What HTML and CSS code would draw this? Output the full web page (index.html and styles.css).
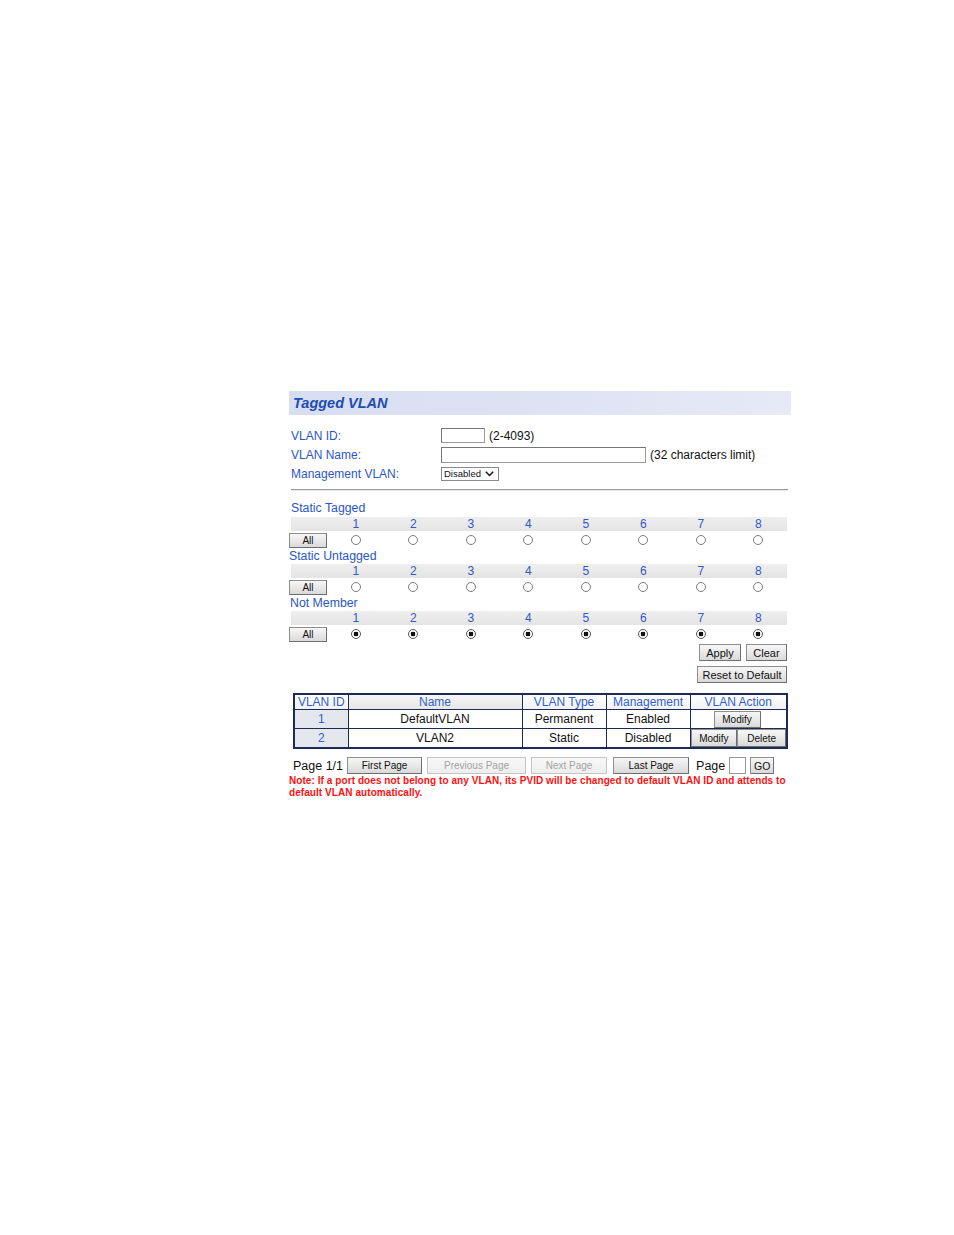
FILE: index.html
```html
<!DOCTYPE html>
<html>
<head>
<meta charset="utf-8">
<link rel="stylesheet" href="styles.css">
</head>
<body>
<div class="panel">
  <div class="title">Tagged VLAN</div>

  <div class="form">
    <div class="frow">
      <span class="flabel">VLAN ID:</span>
      <span class="input id-input"></span>
      <span class="hint">(2-4093)</span>
    </div>
    <div class="frow">
      <span class="flabel">VLAN Name:</span>
      <span class="input name-input"></span>
      <span class="hint">(32 characters limit)</span>
    </div>
    <div class="frow">
      <span class="flabel">Management VLAN:</span>
      <span class="select">Disabled<svg class="caret" width="9" height="6" viewBox="0 0 9 6"><path d="M0.8 0.8 L4.5 4.6 L8.2 0.8" fill="none" stroke="#111" stroke-width="1.4"/></svg></span>
    </div>
  </div>

  <div class="rule"></div>

  <div class="section sec-first">
    <div class="slabel">Static Tagged</div>
    <div class="band"><span></span><span>1</span><span>2</span><span>3</span><span>4</span><span>5</span><span>6</span><span>7</span><span>8</span></div>
    <div class="ports">
      <span class="btn all">All</span>
      <span class="radio"></span><span class="radio"></span><span class="radio"></span><span class="radio"></span>
      <span class="radio"></span><span class="radio"></span><span class="radio"></span><span class="radio"></span>
    </div>
  </div>

  <div class="section">
    <div class="slabel s2">Static Untagged</div>
    <div class="band"><span></span><span>1</span><span>2</span><span>3</span><span>4</span><span>5</span><span>6</span><span>7</span><span>8</span></div>
    <div class="ports">
      <span class="btn all">All</span>
      <span class="radio"></span><span class="radio"></span><span class="radio"></span><span class="radio"></span>
      <span class="radio"></span><span class="radio"></span><span class="radio"></span><span class="radio"></span>
    </div>
  </div>

  <div class="section">
    <div class="slabel s3">Not Member</div>
    <div class="band"><span></span><span>1</span><span>2</span><span>3</span><span>4</span><span>5</span><span>6</span><span>7</span><span>8</span></div>
    <div class="ports">
      <span class="btn all">All</span>
      <span class="radio on"></span><span class="radio on"></span><span class="radio on"></span><span class="radio on"></span>
      <span class="radio on"></span><span class="radio on"></span><span class="radio on"></span><span class="radio on"></span>
    </div>
  </div>

  <div class="actions">
    <div class="arow">
      <span class="btn apply">Apply</span>
      <span class="btn clear">Clear</span>
    </div>
    <div class="arow">
      <span class="btn reset">Reset to Default</span>
    </div>
  </div>

  <table class="vlans">
    <thead>
      <tr>
        <th class="c-id">VLAN ID</th>
        <th class="c-name">Name</th>
        <th class="c-type">VLAN Type</th>
        <th class="c-mgmt">Management</th>
        <th class="c-act">VLAN Action</th>
      </tr>
    </thead>
    <tbody>
      <tr>
        <td class="idcell">1</td>
        <td>DefaultVLAN</td>
        <td>Permanent</td>
        <td>Enabled</td>
        <td class="actcell"><div class="acts one"><span class="btn small modify1">Modify</span></div></td>
      </tr>
      <tr>
        <td class="idcell">2</td>
        <td>VLAN2</td>
        <td>Static</td>
        <td>Disabled</td>
        <td class="actcell"><div class="acts"><span class="btn small modify2">Modify</span><span class="btn small delete">Delete</span></div></td>
      </tr>
    </tbody>
  </table>

  <div class="pager">
    <span class="ptext">Page 1/1</span>
    <span class="btn pbtn pfirst">First Page</span>
    <span class="btn pbtn pprev disabled">Previous Page</span>
    <span class="btn pbtn pnext disabled">Next Page</span>
    <span class="btn pbtn plast">Last Page</span>
    <span class="ptext page">Page</span>
    <span class="input pinput"></span>
    <span class="btn pbtn go">GO</span>
  </div>

  <p class="note">Note: If a port does not belong to any VLAN, its PVID will be changed to default VLAN ID and attends to default VLAN automatically.</p>
</div>
</body>
</html>
```

FILE: styles.css
```css
* { box-sizing: border-box; }

html, body {
  margin: 0;
  padding: 0;
  background: #ffffff;
}

body {
  font-family: "Liberation Sans", Arial, sans-serif;
  font-size: 12px;
  color: #000;
}

.panel {
  width: 502px;
  margin: 391px 0 0 289px;
}

.title {
  height: 24px;
  padding: 3px 0 0 4px;
  background: linear-gradient(to right, #d8def1 0%, #dfe4f4 60%, #e6eaf7 100%);
  color: #1b4db3;
  font-weight: bold;
  font-style: italic;
  font-size: 14.5px;
  line-height: 18px;
}

.form {
  margin-top: 11px;
  padding-left: 2px;
  display: flex;
  flex-direction: column;
}

.frow {
  height: 19px;
  display: flex;
  align-items: center;
}

.flabel {
  width: 150px;
  color: #2a56c6;
  font-size: 12px;
}

.hint {
  margin-left: 4px;
  font-size: 12px;
  color: #111;
}

.input {
  display: inline-block;
  background: #fff;
  border: 1px solid #9a9a9a;
  border-top-color: #777;
  border-left-color: #777;
}

.id-input { width: 44px; height: 15px; }
.name-input { width: 205px; height: 16px; }

.select {
  display: inline-flex;
  align-items: center;
  width: 58px;
  height: 14px;
  border: 1px solid #8a8a8a;
  font-size: 9.5px;
  padding-left: 2px;
  background: #fff;
  color: #111;
}

.caret { margin-left: 4px; }

.rule {
  margin: 6px 3px 0 2px;
  height: 2px;
  border-top: 1px solid #9b9b9b;
  border-bottom: 1px solid #e6e6e6;
}

.section { display: flex; flex-direction: column; }

.section.sec-first { margin-top: 10px; }

.slabel {
  height: 15px;
  line-height: 15px;
  padding-left: 2px;
  color: #2a56c6;
  font-size: 12.3px;
}

.slabel.s2, .slabel.s3 { padding-left: 0; height: 14px; line-height: 14px; margin-top: 1px; }
.slabel.s3 { padding-left: 1px; }

.band {
  margin-top: 1px;
  margin-left: 2px;
  width: 496px;
  height: 14px;
  display: grid;
  grid-template-columns: 36px repeat(8, 57.5px);
  background: linear-gradient(to bottom, #efefef 0%, #e4e4e4 100%);
  color: #3358c8;
  font-size: 12px;
  line-height: 14px;
  text-align: center;
}

.ports {
  margin-top: 1px;
  height: 16px;
  display: grid;
  grid-template-columns: 38px repeat(8, 57.5px);
  align-items: center;
  justify-items: center;
}

.btn {
  display: inline-flex;
  align-items: center;
  justify-content: center;
  border: 1px solid #8e8e8e;
  border-right-color: #6e6e6e;
  border-bottom-color: #6e6e6e;
  background: linear-gradient(to bottom, #f6f6f6 0%, #e9e9e9 50%, #d9d9d9 100%);
  color: #111;
  font-size: 10.5px;
  white-space: nowrap;
}

.all {
  justify-self: start;
  width: 38px;
  height: 15px;
  font-size: 10px;
}

.radio {
  display: block;
  width: 10px;
  height: 10px;
  border: 1px solid #7c7c7c;
  border-radius: 50%;
  background: #fff;
}

.radio.on {
  background: radial-gradient(circle, #111 0, #111 2.2px, #fff 2.6px);
  border-color: #555;
}

.actions {
  margin-top: 2px;
  display: flex;
  flex-direction: column;
  align-items: flex-end;
  padding-right: 4px;
  gap: 5px;
}

.arow { display: flex; gap: 5px; }

.apply { width: 42px; height: 17px; font-size: 11px; }
.clear { width: 41px; height: 17px; font-size: 11px; }
.reset { width: 90px; height: 17px; font-size: 11px; }

.vlans {
  margin: 10px 0 0 4px;
  width: 493px;
  border-collapse: collapse;
  border: 2px solid #1c2a55;
  table-layout: fixed;
}

.vlans th, .vlans td {
  border: 1px solid #1c2a55;
  padding: 0;
  text-align: center;
  font-size: 12px;
  white-space: nowrap;
}

.vlans th {
  height: 15px;
  font-weight: normal;
  color: #2f5fd2;
  background: linear-gradient(to bottom, #ffffff 0%, #f1f1f1 100%);
}

.vlans th.c-name { background: linear-gradient(to bottom, #f6f6f6 0%, #e6e6e6 100%); }

.c-id { width: 54px; }
.c-name { width: 174px; }
.c-type { width: 84px; }
.c-mgmt { width: 84px; }
.c-act { width: 97px; }

.vlans td { height: 19px; color: #111; }

.vlans td.idcell {
  background: #e4e7ee;
  color: #2f5fd2;
}

.actcell { padding: 0; }

.acts {
  display: flex;
  justify-content: space-between;
}

.acts.one { justify-content: flex-start; }

.small { height: 17px; font-size: 10px; }
.modify1 { width: 47px; margin-left: 23px; }
.modify2 { width: 47px; height: 18px; }
.delete { width: 49px; height: 18px; }

.pager {
  margin: 8px 0 0 4px;
  display: flex;
  align-items: center;
  height: 17px;
}

.ptext { font-size: 12.5px; color: #111; }

.pbtn { height: 17px; font-size: 10px; }
.pfirst { width: 75px; margin-left: 4px; }
.pprev { width: 99px; margin-left: 5px; }
.pnext { width: 76px; margin-left: 5px; }
.plast { width: 76px; margin-left: 6px; }
.page { margin-left: 7px; }
.pinput { width: 17px; height: 17px; margin-left: 4px; border-color: #999; }
.go { width: 24px; margin-left: 4px; font-size: 10.5px; }

.disabled {
  color: #a3a3a3;
  background: linear-gradient(to bottom, #f7f7f7 0%, #eeeeee 100%);
  border-color: #c4c4c4;
}

.note {
  margin: 1px 0 0 0;
  width: 502px;
  color: #ff1010;
  font-weight: bold;
  font-size: 10px;
  letter-spacing: 0.07px;
  line-height: 12px;
}
```
